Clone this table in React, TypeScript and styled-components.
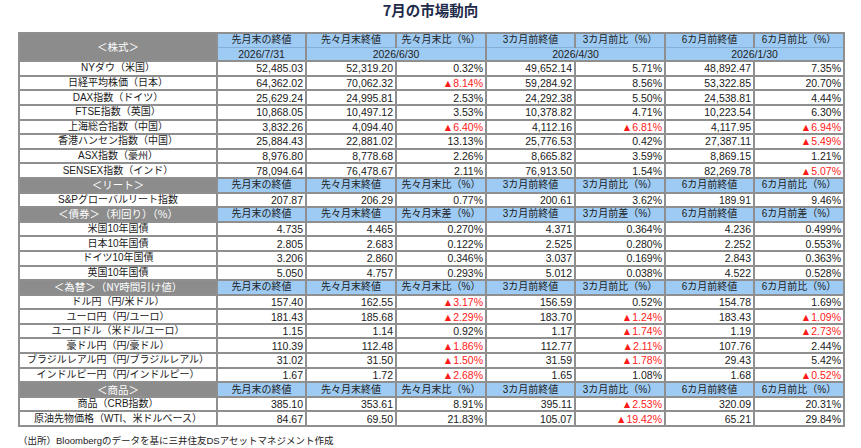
import styled, { createGlobalStyle } from 'styled-components';

const GlobalStyle = createGlobalStyle`
  body {
    margin: 0;
    background: #ffffff;
    font-family: 'Liberation Sans', 'Noto Sans CJK JP', sans-serif;
    color: #1a1a1a;
  }
`;

type Section = {
  title: string;
  diff?: boolean;
  dates?: boolean;
  rows: string[][];
};

const sections: Section[] = [
  {
    title: '＜株式＞',
    dates: true,
    rows: [
      ['NYダウ（米国）', '52,485.03', '52,319.20', '0.32%', '49,652.14', '5.71%', '48,892.47', '7.35%'],
      ['日経平均株価（日本）', '64,362.02', '70,062.32', '▲8.14%', '59,284.92', '8.56%', '53,322.85', '20.70%'],
      ['DAX指数（ドイツ）', '25,629.24', '24,995.81', '2.53%', '24,292.38', '5.50%', '24,538.81', '4.44%'],
      ['FTSE指数（英国）', '10,868.05', '10,497.12', '3.53%', '10,378.82', '4.71%', '10,223.54', '6.30%'],
      ['上海総合指数（中国）', '3,832.26', '4,094.40', '▲6.40%', '4,112.16', '▲6.81%', '4,117.95', '▲6.94%'],
      ['香港ハンセン指数（中国）', '25,884.43', '22,881.02', '13.13%', '25,776.53', '0.42%', '27,387.11', '▲5.49%'],
      ['ASX指数（豪州）', '8,976.80', '8,778.68', '2.26%', '8,665.82', '3.59%', '8,869.15', '1.21%'],
      ['SENSEX指数（インド）', '78,094.64', '76,478.67', '2.11%', '76,913.50', '1.54%', '82,269.78', '▲5.07%']
    ]
  },
  {
    title: '＜リート＞',
    rows: [['S&Pグローバルリート指数', '207.87', '206.29', '0.77%', '200.61', '3.62%', '189.91', '9.46%']]
  },
  {
    title: '＜債券＞（利回り）（%）',
    diff: true,
    rows: [
      ['米国10年国債', '4.735', '4.465', '0.270%', '4.371', '0.364%', '4.236', '0.499%'],
      ['日本10年国債', '2.805', '2.683', '0.122%', '2.525', '0.280%', '2.252', '0.553%'],
      ['ドイツ10年国債', '3.206', '2.860', '0.346%', '3.037', '0.169%', '2.843', '0.363%'],
      ['英国10年国債', '5.050', '4.757', '0.293%', '5.012', '0.038%', '4.522', '0.528%']
    ]
  },
  {
    title: '＜為替＞（NY時間引け値）',
    rows: [
      ['ドル円（円/米ドル）', '157.40', '162.55', '▲3.17%', '156.59', '0.52%', '154.78', '1.69%'],
      ['ユーロ円（円/ユーロ）', '181.43', '185.68', '▲2.29%', '183.70', '▲1.24%', '183.43', '▲1.09%'],
      ['ユーロドル（米ドル/ユーロ）', '1.15', '1.14', '0.92%', '1.17', '▲1.74%', '1.19', '▲2.73%'],
      ['豪ドル円（円/豪ドル）', '110.39', '112.48', '▲1.86%', '112.77', '▲2.11%', '107.76', '2.44%'],
      ['ブラジルレアル円（円/ブラジルレアル）', '31.02', '31.50', '▲1.50%', '31.59', '▲1.78%', '29.43', '5.42%'],
      ['インドルピー円（円/インドルピー）', '1.67', '1.72', '▲2.68%', '1.65', '1.08%', '1.68', '▲0.52%']
    ]
  },
  {
    title: '＜商品＞',
    rows: [
      ['商品（CRB指数）', '385.10', '353.61', '8.91%', '395.11', '▲2.53%', '320.09', '20.31%'],
      ['原油先物価格（WTI、米ドルベース）', '84.67', '69.50', '21.83%', '105.07', '▲19.42%', '65.21', '29.84%']
    ]
  }
];

const headLabels = (diff?: boolean) => {
  const d = diff ? '差' : '比';
  return [
    '先月末の終値',
    '先々月末終値',
    `先々月末${d}（%）`,
    '3カ月前終値',
    `3カ月前${d}（%）`,
    '6カ月前終値',
    `6カ月前${d}（%）`
  ];
};

const colWidths = [198, 89, 90, 90, 89, 90, 89, 90];

const App: React.FC = () => {
  return (
    <>
      <GlobalStyle />
      <Page>
        <Title>7月の市場動向</Title>
        <Table>
          <colgroup>
            {colWidths.map((w, i) => (
              <col key={i} style={{ width: w }} />
            ))}
          </colgroup>
          <tbody>
            {sections.map((s) => (
              <Block key={s.title} section={s} />
            ))}
          </tbody>
        </Table>
        <Footer>（出所）Bloombergのデータを基に三井住友DSアセットマネジメント作成</Footer>
      </Page>
    </>
  );
};

const Block: React.FC<{ section: Section }> = ({ section }) => {
  return (
    <>
      <tr>
        <SectionCell rowSpan={section.dates ? 2 : 1}>{section.title}</SectionCell>
        {headLabels(section.diff).map((h) => (
          <HeadCell key={h} $thinBottom={section.dates}>
            {h}
          </HeadCell>
        ))}
      </tr>
      {section.dates && (
        <tr>
          <HeadCell $thinTop>2026/7/31</HeadCell>
          <HeadCell $thinTop colSpan={2}>
            2026/6/30
          </HeadCell>
          <HeadCell $thinTop colSpan={2}>
            2026/4/30
          </HeadCell>
          <HeadCell $thinTop colSpan={2}>
            2026/1/30
          </HeadCell>
        </tr>
      )}
      {section.rows.map((r) => (
        <tr key={r[0]}>
          <LabelCell>{r[0]}</LabelCell>
          {r.slice(1).map((v, i) => (
            <NumCell key={i} $neg={v.startsWith('▲')}>
              {v}
            </NumCell>
          ))}
        </tr>
      ))}
    </>
  );
};

export default App;

const Page = styled.div`
  padding: 0 18px;
  width: 825px;
`;

const Title = styled.h1`
  margin: 0 0 13px;
  text-align: center;
  font-family: 'Noto Sans CJK JP', sans-serif;
  font-size: 14.5px;
  line-height: 19px;
  font-weight: 700;
  color: #1e2b4a;
`;

const Table = styled.table`
  width: 825px;
  table-layout: fixed;
  border-collapse: collapse;
  border: 2px solid #8f8f8f;
`;

const Cell = styled.td`
  border: 2px solid #8f8f8f;
  padding: 0 3px;
  height: 12.6px;
  line-height: 12px;
  font-size: 10px;
  white-space: nowrap;
  overflow: hidden;
`;

const SectionCell = styled(Cell)`
  background: #8c8c8c;
  color: #ffffff;
  text-align: center;
  font-family: 'Noto Sans CJK JP', sans-serif;
  font-size: 10.5px;
`;

const HeadCell = styled(Cell)<{ $thinBottom?: boolean; $thinTop?: boolean }>`
  background: #9ecbf4;
  text-align: center;
  color: #222;
  font-family: 'Liberation Sans', 'Noto Sans CJK JP', sans-serif;
  font-size: ${(p) => (p.$thinTop ? '10.5px' : '10px')};
  border-bottom: ${(p) => (p.$thinBottom ? '1px solid #86aed6' : '2px solid #8f8f8f')};
  border-top: ${(p) => (p.$thinTop ? '1px solid #86aed6' : '2px solid #8f8f8f')};
`;

const LabelCell = styled(Cell)`
  background: #ffffff;
  text-align: center;
  font-family: 'Liberation Sans', 'Noto Sans CJK JP', sans-serif;
`;

const NumCell = styled(Cell)<{ $neg?: boolean }>`
  background: #ffffff;
  text-align: right;
  font-size: 10.5px;
  padding-right: 2px;
  color: ${(p) => (p.$neg ? '#ff1a1a' : '#1a1a1a')};
`;

const Footer = styled.div`
  margin-top: 7px;
  font-family: 'Liberation Sans', 'Noto Sans CJK JP', sans-serif;
  font-size: 9.5px;
  line-height: 14px;
  color: #222;
`;
